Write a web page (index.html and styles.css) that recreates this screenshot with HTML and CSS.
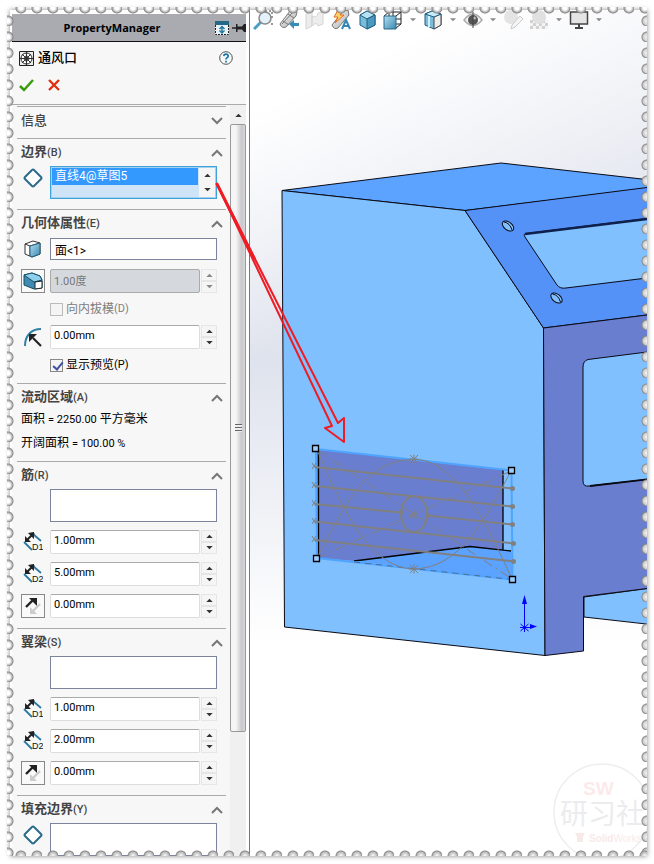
FILE: index.html
```html
<!DOCTYPE html>
<html lang="zh-CN">
<head>
<meta charset="utf-8">
<title>PropertyManager</title>
<link rel="stylesheet" href="styles.css">
</head>
<body>
<svg class="defs" aria-hidden="true">
  <defs>
    <linearGradient id="teal" x1="0" y1="0" x2="1" y2="1"><stop offset="0" stop-color="#b4e0f4"/><stop offset="1" stop-color="#3b87ad"/></linearGradient>
    <linearGradient id="metal" x1="0" y1="0" x2="1" y2="1"><stop offset="0" stop-color="#fff"/><stop offset="1" stop-color="#a8a8a8"/></linearGradient>
    <symbol id="up" viewBox="0 0 8 5"><path d="M0 5 4 1l4 4z"/></symbol>
    <symbol id="down" viewBox="0 0 8 5"><path d="M0 0h8L4 4z"/></symbol>
    <symbol id="chev-up" viewBox="0 0 12 8"><path d="M1 7 6 2l5 5" fill="none" stroke="#777" stroke-width="2"/></symbol>
    <symbol id="chev-down" viewBox="0 0 12 8"><path d="M1 1l5 5 5-5" fill="none" stroke="#777" stroke-width="2"/></symbol>
    <symbol id="diamond" viewBox="0 0 20 20"><path d="M2 9 9 2q1-1 2 0l7 7q1 1 0 2l-7 7q-1 1-2 0l-7-7q-1-1 0-2z" fill="#fff" stroke="#2c6b8b" stroke-width="2"/></symbol>
    <symbol id="dim1" viewBox="0 0 20 20"><path d="M10 2l8 7M1 10l8 8" stroke="#2b7ba3" stroke-width="1.8"/><path d="M3 9l8-8" stroke="#222" stroke-width="2"/><path d="M2 10V4l6 6zM11 0v7L5 1z" fill="#222"/><text x="9" y="18" class="dim-label">D1</text></symbol>
    <symbol id="dim2" viewBox="0 0 20 20"><path d="M10 2l8 7M1 10l8 8" stroke="#2b7ba3" stroke-width="1.8"/><path d="M3 9l8-8" stroke="#222" stroke-width="2"/><path d="M2 10V4l6 6zM11 0v7L5 1z" fill="#222"/><text x="9" y="18" class="dim-label">D2</text></symbol>
    <symbol id="flip" viewBox="0 0 20 20"><path d="M3 11l7-7" stroke="#222" stroke-width="2.4"/><path d="M6 2h8v8z" fill="#222"/><path d="M17 8l-7 7" stroke="#ccc" stroke-width="2.4"/><path d="M7 11v7h7z" fill="#ccc"/></symbol>
    <symbol id="face" viewBox="0 0 20 20"><path d="M2 5 10 2l7 2v11l-8 3-7-3z" fill="#fff" stroke="#333"/><path d="M2 5l5 2 10-3M7 7v10" fill="none" stroke="#333"/><path d="M7 7l10-3v11l-8 3-2-1z" fill="url(#teal)" stroke="#245f7c"/></symbol>
    <symbol id="draft" viewBox="0 0 20 20"><path d="M1 4 9 2l8 3 2 4v8l-8 1-10-4z" fill="#3f8bb3" stroke="#174b66"/><path d="M1 4 9 2l8 3 2 4-8 2z" fill="#8ed0ec" stroke="#174b66"/><path d="M12 11l7-1v7l-7 1z" fill="#fff" stroke="#222"/></symbol>
    <symbol id="radius" viewBox="0 0 20 20"><path d="M2 19C2 9 8 2 18 2" fill="none" stroke="#2f7fa2" stroke-width="2"/><path d="M18 19 10 11" stroke="#222" stroke-width="2.2"/><path d="M6 7h8l-8 8z" fill="#222"/></symbol>
  </defs>
</svg>
<main class="stamp">
  <aside class="panel">
    <header class="titlebar">
      <h1>PropertyManager</h1>
      <button class="plain" aria-label="展开"><svg width="14" height="14" viewBox="0 0 14 14"><path d="M0 0h14v14H0z" fill="#e8f1f5"/><path d="M0 0h14v4H0z" fill="#246887"/><path d="M.5 4v9.500h13V4" fill="none" stroke="#222" stroke-dasharray="2 1"/><path d="M7 5v7M4.500 8 7 5.500 9.500 8M4.500 9.500 7 12l2.500-2.500" fill="none" stroke="#2879a0" stroke-width="1.500"/></svg></button>
      <button class="plain" aria-label="固定"><svg width="14" height="12" viewBox="0 0 14 12"><path d="M0 6h5" stroke="#222" stroke-width="1.500"/><path d="M4 2h1.500v2.500H10L12 2h2v8h-2l-2-2.500H5.500V10H4z" fill="#222"/></svg></button>
    </header>
    <div class="feature">
      <div class="feature-name">
        <svg width="15" height="15" viewBox="0 0 15 15"><path d="M.5.5h14v14H.5z" fill="#eee" stroke="#222"/><circle cx="7.500" cy="7.500" r="5.500" fill="#fff" stroke="#222"/><circle cx="7.500" cy="7.500" r="2.500" fill="none" stroke="#444"/><path d="M7.500 1v13M1 7.500h13M3 3l9 9M12 3l-9 9" stroke="#333"/></svg>
        <h2>通风口</h2>
        <button class="plain" aria-label="帮助"><svg width="14" height="14" viewBox="0 0 14 14"><circle cx="7" cy="7" r="6.300" fill="#f4f8fa" stroke="#555"/><path d="M4.800 5.200Q5 3.200 7 3.200t2.200 1.900Q9.200 6.200 8 6.800q-1 .5-1 1.700M7 9.800v1.600" fill="none" stroke="#1d75a4" stroke-width="1.700"/></svg></button>
      </div>
      <div class="actions">
        <button class="plain" aria-label="确定"><svg width="15" height="13" viewBox="0 0 15 13"><path d="M1 7l4 4L14 1" fill="none" stroke="#3a9d0c" stroke-width="2.500"/></svg></button>
        <button class="plain" aria-label="取消"><svg width="12" height="12" viewBox="0 0 12 12"><path d="M1 1l10 10M11 1 1 11" stroke="#e22c0c" stroke-width="2.300"/></svg></button>
      </div>
    </div>
    <div class="scroller">
      <div class="sections">
        <section class="group closed">
          <h3>信息</h3><svg class="chev"><use href="#chev-down"/></svg>
        </section>
        <section class="group">
          <h3>边界<small>(B)</small></h3><svg class="chev"><use href="#chev-up"/></svg>
          <div class="rows">
            <div class="row tall"><svg class="ico"><use href="#diamond"/></svg>
              <div class="picked"><ul role="listbox" aria-label="边界"><li role="option" aria-selected="true">直线4@草图5</li></ul>
                <span class="spin flat"><button aria-label="上"><svg><use href="#up"/></svg></button><button aria-label="下"><svg><use href="#down"/></svg></button></span></div></div>
          </div>
        </section>
        <section class="group">
          <h3>几何体属性<small>(E)</small></h3><svg class="chev"><use href="#chev-up"/></svg>
          <div class="rows">
            <div class="row"><svg class="ico"><use href="#face"/></svg><input class="facebox" aria-label="面" value="面&lt;1&gt;"></div>
            <div class="row"><button class="boxed" aria-label="拔模"><svg class="ico"><use href="#draft"/></svg></button><input class="num off" aria-label="拔模角度" value="1.00度" disabled><span class="spin off"><button aria-label="上"><svg><use href="#up"/></svg></button><button aria-label="下"><svg><use href="#down"/></svg></button></span></div>
            <label class="check off"><input type="checkbox" disabled>向内拔模<small>(D)</small></label>
            <div class="row"><svg class="ico"><use href="#radius"/></svg><input class="num" aria-label="半径" value="0.00mm"><span class="spin"><button aria-label="上"><svg><use href="#up"/></svg></button><button aria-label="下"><svg><use href="#down"/></svg></button></span></div>
            <label class="check"><input type="checkbox" checked>显示预览<small>(P)</small></label>
          </div>
        </section>
        <section class="group">
          <h3>流动区域<small>(A)</small></h3><svg class="chev"><use href="#chev-up"/></svg>
          <div class="rows">
            <p>面积 <small>= 2250.00</small> 平方毫米</p>
            <p>开阔面积 <small>= 100.00 %</small></p>
          </div>
        </section>
        <section class="group">
          <h3>筋<small>(R)</small></h3><svg class="chev"><use href="#chev-up"/></svg>
          <div class="rows">
            <div class="row tall"><ul class="listbox" role="listbox" aria-label="筋"></ul></div>
            <div class="row"><svg class="ico"><use href="#dim1"/></svg><input class="num" aria-label="筋深度" value="1.00mm"><span class="spin"><button aria-label="上"><svg><use href="#up"/></svg></button><button aria-label="下"><svg><use href="#down"/></svg></button></span></div>
            <div class="row"><svg class="ico"><use href="#dim2"/></svg><input class="num" aria-label="筋宽度" value="5.00mm"><span class="spin"><button aria-label="上"><svg><use href="#up"/></svg></button><button aria-label="下"><svg><use href="#down"/></svg></button></span></div>
            <div class="row"><button class="boxed" aria-label="反向"><svg class="ico"><use href="#flip"/></svg></button><input class="num" aria-label="筋等距" value="0.00mm"><span class="spin"><button aria-label="上"><svg><use href="#up"/></svg></button><button aria-label="下"><svg><use href="#down"/></svg></button></span></div>
          </div>
        </section>
        <section class="group">
          <h3>翼梁<small>(S)</small></h3><svg class="chev"><use href="#chev-up"/></svg>
          <div class="rows">
            <div class="row tall"><ul class="listbox" role="listbox" aria-label="翼梁"></ul></div>
            <div class="row"><svg class="ico"><use href="#dim1"/></svg><input class="num" aria-label="翼梁深度" value="1.00mm"><span class="spin"><button aria-label="上"><svg><use href="#up"/></svg></button><button aria-label="下"><svg><use href="#down"/></svg></button></span></div>
            <div class="row"><svg class="ico"><use href="#dim2"/></svg><input class="num" aria-label="翼梁宽度" value="2.00mm"><span class="spin"><button aria-label="上"><svg><use href="#up"/></svg></button><button aria-label="下"><svg><use href="#down"/></svg></button></span></div>
            <div class="row"><button class="boxed" aria-label="反向"><svg class="ico"><use href="#flip"/></svg></button><input class="num" aria-label="翼梁等距" value="0.00mm"><span class="spin"><button aria-label="上"><svg><use href="#up"/></svg></button><button aria-label="下"><svg><use href="#down"/></svg></button></span></div>
          </div>
        </section>
        <section class="group">
          <h3>填充边界<small>(Y)</small></h3><svg class="chev"><use href="#chev-up"/></svg>
          <div class="rows">
            <div class="row tall"><svg class="ico"><use href="#diamond"/></svg><ul class="listbox" role="listbox" aria-label="填充边界"></ul></div>
          </div>
        </section>
      </div>
      <div class="scrollbar"><button class="plain" aria-label="向上滚动"><svg><use href="#up"/></svg></button><div class="thumb"><span class="grip"></span></div></div>
    </div>
  </aside>

  <section class="viewport">
    <svg class="model" viewBox="250 10 397 846" preserveAspectRatio="xMinYMin slice" role="img" aria-label="三维模型">
      <g stroke="#0a0a14" stroke-linejoin="round">
        <path d="M584 597 655 587.500V625L584 617z" fill="#80c0ff"/>
        <path d="M282 190.500 501 163l154 17.500v7L465 210.500z" fill="#5ca2ff"/>
        <path d="M282 190.500 465 210.500 543.500 328 545 655.500 284.500 627z" fill="#80c0ff"/>
        <path d="M465 210.500 655 186.500V314L543.500 328z" fill="#5592f8"/>
        <path d="M543.500 328 655 314V587.500L583.500 596.500V651L545 655.500z" fill="#6a7ed0"/>
        <path d="M526 233.500 655 217.500V277L566 288q-6 1-9-3L525 237q-2-3 1-3.500z" fill="#80c0ff"/>
        <path d="M525 234 655 218" stroke-width="2.500" stroke="#10204c"/>
        <path d="M588 359.500 655 351V478.500L589 486q-6 1-6-5V367q0-6 5-7.500z" fill="#80c0ff"/>
        <path d="M590 486 655 478.500" stroke-width="1.800"/>
        <g fill="#80c0ff"><ellipse cx="508" cy="226" rx="6.500" ry="4" transform="rotate(38 508 226)"/><ellipse cx="556.500" cy="298" rx="6.500" ry="4" transform="rotate(38 556.500 298)"/><path d="M504 222q6 1 8 8M552.500 294q6 1 8 8" fill="none"/></g>
      </g>
      <path d="M317 449.500 503 470V550L470 546.500 354 561 317 558z" fill="#6a7ed0"/>
      <path d="M354 561 470 546.500 511 551 512.500 579z" fill="#5ca2ff"/>
      <path d="M318.500 451V558M503 470v80M354 561 470 546.500 511 551" fill="none" stroke="#000" stroke-width="1.300"/>
      <path d="M316 449 511.500 470.500 512.500 579.500 317 558z" fill="none" stroke="#4ea4ff" stroke-width="2"/>
      <path d="M354 562 512 579.500" stroke="#4c6f99" stroke-dasharray="6 5"/>
      <g fill="none" stroke="#808080">
        <path d="M317 450C337 495 365 568 414 569 460 568 485 520 511 471M317 558C345 505 365 460 414 459.500 455 459 485 520 512 579"/>
        <path d="M317 450 512 579M317 558 511 471" stroke-dasharray="10 4 2 4"/>
        <path d="M315 467 513 488.500M315 486 513 506.500M315 504 401 512.500M427 515.500 513 524.500M315 521.500 514 543.500M315 540 514 561.500" stroke-width="2"/>
        <ellipse cx="414" cy="514" rx="13" ry="18" stroke-width="2"/>
        <path id="star" d="M409 459h9M410 455l8 8M418 455l-8 8M414 454.500v9"/>
        <use href="#star" y="55.500"/><use href="#star" y="110"/>
        <path d="M312 463l4 6M312 469l4-6M312 482l4 6M312 488l4-6M312 500l4 6M312 506l4-6M312 518l4 6M312 524l4-6M312 536l4 6M312 542l4-6"/>
      </g>
      <g fill="#808080"><circle cx="512.500" cy="488.500" r="2.500"/><circle cx="512.500" cy="506.500" r="2.500"/><circle cx="512.500" cy="524.500" r="2.500"/><circle cx="513.500" cy="543.500" r="2.500"/><circle cx="513.500" cy="561.500" r="2.500"/><circle cx="401" cy="512.500" r="2.500"/><circle cx="428" cy="515.500" r="2.500"/></g>
      <g fill="#9bceff" stroke="#000" stroke-width="1.300"><path d="M312.500 445.500h6v6h-6zM508.500 467.500h6v6h-6zM509.500 576.500h6v6h-6zM313.500 555.500h6v6h-6z"/></g>
      <path d="M524.500 632V600M520 627.500h12M520.500 624l8 7M528.500 624l-8 7" fill="none" stroke="#00f"/><path d="M522 604l2.500-9 2.500 9zM530 624l7 2.500-7 2.500z" fill="#00f"/>
      <g><circle cx="602" cy="812" r="48" fill="none" stroke="#eeeef0" stroke-width="1.500"/>
        <text x="583" y="795" class="wm-sw">SW</text><text x="560" y="824" class="wm-cn">研习社</text><path d="M575 833h10l-2 4v5h-6v-5z" fill="#f9eaea"/><text x="589" y="842" class="wm-sub"><tspan font-weight="bold">Solid</tspan>Works</text></g>
    </svg>
    <nav class="toolbar" aria-label="视图">
      <button aria-label="整屏显示全图"><svg viewBox="0 0 20 20"><path d="M12 1h7v8M19 13v4" fill="none" stroke="#333" stroke-dasharray="2 2"/><path d="M8 12l-7 7" stroke="#4b9fc8" stroke-width="3"/><circle cx="12" cy="8" r="6" fill="#e5f1f9" stroke="#888" stroke-width="1.500"/></svg></button>
      <button aria-label="上一视图"><svg viewBox="0 0 20 20"><path d="M1 14 11 1l4-1 3 2-1 4L7 17q-4 2-6-3z" fill="url(#metal)" stroke="#777"/><path d="M4 11l6 4M9 4l6 4M3 14 14 2" stroke="#777"/><path d="M10 14l5-4v3h5v3h-5v3z" fill="#378db5"/></svg></button>
      <button class="dim" aria-label="剖面视图"><svg viewBox="0 0 20 20"><path d="M1 4l6-3v15l-6 3zM7 6q5 3 6-3l5-1v12l-5 2q-1-5-6 0z" fill="#ddd" stroke="#aaa"/></svg></button>
      <button aria-label="动态注解视图"><svg viewBox="0 0 20 20"><path d="M1 15 12 1l5-1 1 5-11 13q-4 2-6-3z" fill="url(#metal)" stroke="#777"/><path d="M7 0 3 7h4l-3 6 9-8H9l4-5z" fill="#ffd36a" stroke="#e66a1c"/><path d="M11 19l4-9 4 9M12.500 16h5" fill="none" stroke="#3387b2" stroke-width="2"/></svg></button>
      <button aria-label="视图定向"><svg viewBox="0 0 20 20"><path d="M3 5 10 1l8 4v10l-8 4-7-4z" fill="#78bddb" stroke="#225f80"/><path d="M3 5l7 4 8-4-8-4z" fill="#b6e3f4" stroke="#225f80"/><path d="M10 9v10l8-4V5z" fill="#4d9ac0" stroke="#225f80"/></svg></button>
      <button aria-label="显示样式"><svg viewBox="0 0 20 20"><path d="M6 2h12v12H6zM1 6l5-4M13 6l5-4M13 18l5-4M10 1v13M6 9h12" fill="none" stroke="#222"/><path d="M1 6h12v13H1z" fill="url(#teal)" stroke="#286888"/></svg></button>
      <button class="caret" aria-label="更多显示样式"><svg><use href="#down"/></svg></button>
      <button aria-label="剖切"><svg viewBox="0 0 20 20"><path d="M2 4 9 1l9 3v11l-7 4-9-4z" fill="#79bddb" stroke="#225f80"/><path d="M11 7l7-3v11l-7 4z" fill="#eee" stroke="#444"/><path d="M6 6v11" stroke="#d2f0fa" stroke-width="2"/><path d="M2 4l9 3 7-3-9-3z" fill="#c8e9f6" stroke="#225f80"/></svg></button>
      <button class="caret" aria-label="更多剖切"><svg><use href="#down"/></svg></button>
      <button aria-label="隐藏/显示项目"><svg viewBox="0 0 20 20"><path d="M1 10q9-12 18 0-9 11-18 0z" fill="#f5f5f5" stroke="#aaa" stroke-width="1.500"/><circle cx="10" cy="10" r="5" fill="#555"/><circle cx="11.500" cy="8" r="1.500" fill="#bbb"/><path d="M10 2v16" stroke="#444"/></svg></button>
      <button class="caret" aria-label="更多项目"><svg><use href="#down"/></svg></button>
      <button class="dim" aria-label="编辑外观"><svg viewBox="0 0 20 20"><circle cx="8" cy="7" r="7" fill="#ccc"/><path d="M8 19l1-4 8-9 3 3-8 8z" fill="#eee" stroke="#999"/></svg></button>
      <button class="dim" aria-label="应用布景"><svg viewBox="0 0 20 20"><path d="M1 10h18v9H1z" fill="#eee"/><path d="M1 11.500h18M1 17.500h18" stroke="#aaa" stroke-width="3" stroke-dasharray="3 3"/><path d="M4 14.500h15" stroke="#aaa" stroke-width="3" stroke-dasharray="3 3"/><circle cx="10" cy="7" r="7" fill="#c5c5c5"/></svg></button>
      <button class="caret" aria-label="更多布景"><svg><use href="#down"/></svg></button>
      <button aria-label="视图设定"><svg viewBox="0 0 20 20"><path d="M1.500 2h17v12h-17z" fill="#e4e4e4" stroke="#444" stroke-width="1.500"/><path d="M10 14v4M6 18h8" stroke="#444" stroke-width="2"/></svg></button>
      <button class="caret" aria-label="更多设定"><svg><use href="#down"/></svg></button>
    </nav>
  </section>

  <svg class="pointer" width="140" height="270" viewBox="210 180 140 270" aria-hidden="true"><path d="M217 184 332 426 325 428 344 442V418L338 423z" fill="none" stroke="#ee1c25" stroke-width="2" stroke-linejoin="round"/><path d="M217 184 254 258" stroke="#ee1c25" stroke-width="3" stroke-linecap="round"/></svg>
  <span class="edge left"></span><span class="edge right"></span><span class="edge top"></span><span class="edge bottom"></span>
</main>
</body>
</html>
```
FILE: styles.css
```css
* { box-sizing: border-box; }
body {
  margin: 0;
  background: #fff;
  font: 12px/16px Roboto, "Noto Sans CJK SC", sans-serif;
  color: #000;
  overflow: hidden;
}
h1, h2, h3, p, ul { margin: 0; padding: 0; }
ul { list-style: none; }
small { font-size: 11px; }
button { padding: 0; border: 0; background: none; }
.defs { position: absolute; width: 0; height: 0; }
.dim-label { font: 9px "Liberation Sans", sans-serif; fill: #111; }

.stamp {
  position: relative;
  display: grid;
  grid-template-columns: 240px minmax(0, 1fr);
  grid-template-rows: minmax(0, 1fr);
  height: calc(100vh - 18px);
  margin: 10px 7px 8px 10px;
  background: #fff;
  box-shadow: 0 0 5px #888;
}

/* property panel */
.panel {
  display: flex;
  flex-direction: column;
  min-height: 0;
  padding: 4px 3px 0 2px;
  border-right: 1px solid #777;
}
.titlebar {
  display: flex;
  align-items: center;
  gap: 3px;
  height: 28px;
  background: #a9abb0;
  border-bottom: 1px solid #111;
}
.titlebar h1 {
  flex: 1;
  text-align: center;
  font: bold 11px/16px "Open Sans", sans-serif;
}
.plain { display: flex; align-items: center; justify-content: center; }
.feature {
  display: flex;
  flex-direction: column;
  gap: 10px;
  height: 62px;
  padding: 8px 13px 0 7px;
  background: #f7f7f7;
}
.feature-name { display: flex; align-items: center; gap: 4px; height: 16px; }
.feature-name h2 { flex: 1; font-size: 13px; font-weight: 500; }
.actions { display: flex; gap: 14px; height: 18px; }
.scroller {
  flex: 1;
  display: grid;
  grid-template-columns: minmax(0, 1fr) 16px;
  min-height: 0;
  border-top: 1px solid #aaa;
  background: #f7f7f7;
}
.sections { overflow: hidden; padding: 1px 4px 0 5px; }
.group {
  display: grid;
  grid-template-columns: 1fr 14px;
  grid-template-rows: 27px auto;
  align-items: center;
  padding: 0 1px 10px 4px;
  border-top: 1px solid #aaa;
}
.group.closed { padding-bottom: 4px; }
.group h3 { color: #444; font-size: 13px; font-weight: 700; }
.group h3 small { font-weight: 500; }
.group.closed h3 { font-weight: 500; }
.chev { width: 12px; height: 8px; }
.rows {
  grid-column: 1 / -1;
  display: flex;
  flex-direction: column;
  gap: 8px;
}
.rows p { height: 16px; }
.row {
  display: grid;
  grid-template-columns: 29px 150px 16px;
  justify-content: start;
  align-items: center;
  height: 24px;
}
.row > * { grid-row: 1; }
.row.tall { height: 33px; align-items: start; }
.row .spin { margin-left: 1px; }
.ico { width: 20px; height: 20px; margin: 2px; }
.boxed {
  display: flex;
  width: 24px;
  height: 24px;
  border: 1px solid #888;
  background: #f9f9f9;
}
.boxed .ico { margin: 1px; }
.num {
  width: 150px;
  height: 24px;
  padding: 0 3px 3px;
  border: 1px solid #ddd;
  border-top-color: #aaa;
  border-radius: 2px;
  background: #fff;
  color: #000;
  font: 11px/16px Roboto, "Noto Sans CJK SC", sans-serif;
}
.num.off {
  border: 1px solid #aaa;
  background: #d5d9de;
  color: #777;
}
.facebox, .listbox, .picked { grid-column: 2 / 4; width: 167px; }
.facebox {
  height: 22px;
  padding: 0 4px;
  border: 1px solid #7c849c;
  background: #fff;
  font: 12px/16px Roboto, "Noto Sans CJK SC", sans-serif;
}
.listbox { height: 33px; border: 1px solid #7c849c; background: #fff; }
.picked {
  display: flex;
  height: 33px;
  border: 1px solid #3fa0da;
  outline: 1px solid #a3d2ef;
  outline-offset: -2px;
  background: #d0e4f8;
  padding: 1px;
}
.picked ul { flex: 1; }
.picked li {
  height: 17px;
  padding-left: 3px;
  background: #3399ff;
  color: #fff;
  line-height: 16px;
}
.spin { display: grid; grid-template-rows: 12px 12px; width: 16px; }
.spin button {
  display: flex;
  align-items: center;
  justify-content: center;
  border: 1px solid #e6e6e6;
  background: #f5f5f5;
}
.spin svg, .scrollbar button svg { width: 7px; height: 4px; fill: #333; }
.spin.off svg { fill: #888; }
.spin.flat { grid-template-rows: 1fr 1fr; background: #f3f3f3; }
.spin.flat button { border: 0; }
.check { display: flex; align-items: center; height: 16px; padding-left: 29px; }
.check.off { color: #808080; }
.check input {
  appearance: none;
  width: 13px;
  height: 13px;
  margin: 0 3px 0 0;
  border: 1px solid #888;
  background: #f4f4f4;
}
.check.off input { border-color: #bbb; }
.check input:checked::after {
  content: "";
  display: block;
  width: 4px;
  height: 8px;
  margin: 0 0 0 4px;
  border: solid #3f52a3;
  border-width: 0 2px 2px 0;
  transform: rotate(40deg);
}
.scrollbar {
  display: flex;
  flex-direction: column;
  background: #f0f0f0;
}
.scrollbar button { height: 19px; }
.thumb {
  display: flex;
  align-items: center;
  justify-content: center;
  height: 81%;
  border: 1px solid #999;
  border-radius: 2px;
  background: linear-gradient(90deg, #f5f5f5 35%, #c9c9cd 75%, #d6d6d8);
}
.grip {
  width: 7px;
  height: 8px;
  background: repeating-linear-gradient(#666 0 1px, #eee 1px 3px);
}

/* 3D view */
.viewport {
  position: relative;
  min-height: 0;
  background:
    linear-gradient(155deg, #fff 10%, transparent 34%),
    linear-gradient(#eceef4 0, #dfe3ed 42%, #fff 75%);
}
.model { display: block; width: 100%; height: 100%; }
.toolbar {
  position: absolute;
  top: 0;
  left: 0;
  display: flex;
  width: 100%;
  overflow: hidden;
}
.toolbar button {
  flex: none;
  display: flex;
  align-items: center;
  justify-content: center;
  width: 26px;
  height: 20px;
}
.toolbar button svg { width: 20px; height: 20px; }
.toolbar .dim { opacity: .5; }
.toolbar .caret { width: 14px; }
.toolbar .caret svg { width: 6px; height: 4px; fill: #888; }
.wm-sw { font: bold 19px "Liberation Sans", sans-serif; fill: #fceaea; }
.wm-cn { font: 28px "Noto Sans CJK SC", sans-serif; fill: #ececee; }
.wm-sub { font: 10px "Liberation Sans", sans-serif; fill: #f9eaea; }

.pointer { position: absolute; left: 200px; top: 170px; pointer-events: none; }

/* perforated border: half discs bite into each side every 16px */
.edge { position: absolute; pointer-events: none; }
.edge.left, .edge.right { top: 0; bottom: 0; width: 7px; background-size: 7px 16px; }
.edge.top, .edge.bottom { left: 0; right: 0; height: 7px; background-size: 16px 7px; }
.edge.left {
  left: -3px;
  background-image: radial-gradient(circle at 1px 11px, #fff 2px, #bbb 4px, #888 5px, transparent 6px);
}
.edge.right {
  right: 0;
  background-image: radial-gradient(circle at 7px 11px, #eee 1px, #ccc 4px, #888 5px, transparent 6px);
}
.edge.top {
  top: -3px;
  background-image: radial-gradient(circle at 11px 1px, #fff 2px, #bbb 4px, #888 5px, transparent 6px);
}
.edge.bottom {
  bottom: 0;
  background-image: radial-gradient(circle at 11px 7px, #eee 1px, #bbb 4px, #888 5px, transparent 6px);
}
```
